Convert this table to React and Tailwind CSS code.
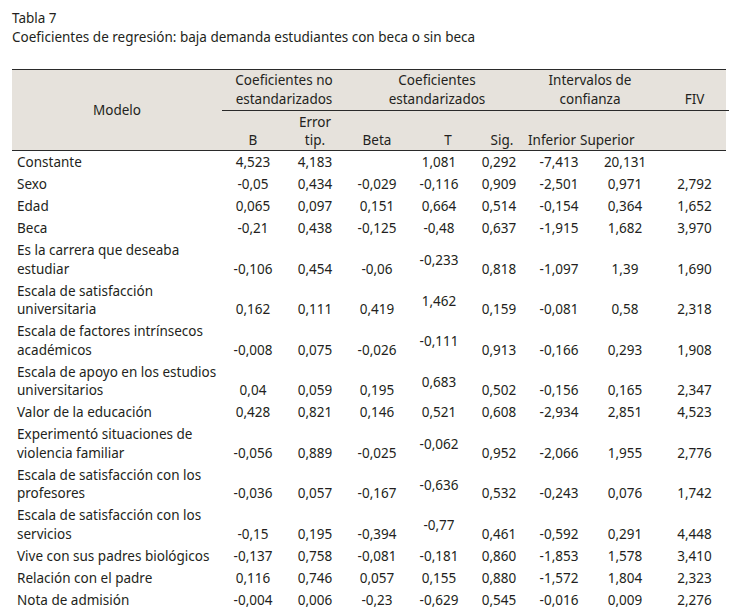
const cols = 'grid grid-cols-[210px_62px_62px_62px_62px_58px_62px_70px_69px]'

const rows = [
  { label: ['Constante'], v: ['4,523', '4,183', '', '1,081', '0,292', '-7,413', '20,131', ''] },
  { label: ['Sexo'], v: ['-0,05', '0,434', '-0,029', '-0,116', '0,909', '-2,501', '0,971', '2,792'] },
  { label: ['Edad'], v: ['0,065', '0,097', '0,151', '0,664', '0,514', '-0,154', '0,364', '1,652'] },
  { label: ['Beca'], v: ['-0,21', '0,438', '-0,125', '-0,48', '0,637', '-1,915', '1,682', '3,970'] },
  { label: ['Es la carrera que deseaba', 'estudiar'], v: ['-0,106', '0,454', '-0,06', '-0,233', '0,818', '-1,097', '1,39', '1,690'] },
  { label: ['Escala de satisfacción', 'universitaria'], v: ['0,162', '0,111', '0,419', '1,462', '0,159', '-0,081', '0,58', '2,318'] },
  { label: ['Escala de factores intrínsecos', 'académicos'], v: ['-0,008', '0,075', '-0,026', '-0,111', '0,913', '-0,166', '0,293', '1,908'] },
  { label: ['Escala de apoyo en los estudios', 'universitarios'], v: ['0,04', '0,059', '0,195', '0,683', '0,502', '-0,156', '0,165', '2,347'] },
  { label: ['Valor de la educación'], v: ['0,428', '0,821', '0,146', '0,521', '0,608', '-2,934', '2,851', '4,523'] },
  { label: ['Experimentó situaciones de', 'violencia familiar'], v: ['-0,056', '0,889', '-0,025', '-0,062', '0,952', '-2,066', '1,955', '2,776'] },
  { label: ['Escala de satisfacción con los', 'profesores'], v: ['-0,036', '0,057', '-0,167', '-0,636', '0,532', '-0,243', '0,076', '1,742'] },
  { label: ['Escala de satisfacción con los', 'servicios'], v: ['-0,15', '0,195', '-0,394', '-0,77', '0,461', '-0,592', '0,291', '4,448'] },
  { label: ['Vive con sus padres biológicos'], v: ['-0,137', '0,758', '-0,081', '-0,181', '0,860', '-1,853', '1,578', '3,410'] },
  { label: ['Relación con el padre'], v: ['0,116', '0,746', '0,057', '0,155', '0,880', '-1,572', '1,804', '2,323'] },
  { label: ['Nota de admisión'], v: ['-0,004', '0,006', '-0,23', '-0,629', '0,545', '-0,016', '0,009', '2,276'] },
]

function Row({ label, v }) {
  const tall = label.length > 1
  return (
    <div className={`${cols} ${tall ? 'h-[40.5px]' : 'h-[22px]'} leading-[18.5px]`}>
      <div className="pl-[5px] pt-[2px]">
        {label.map((l) => (
          <div key={l}>{l}</div>
        ))}
      </div>
      {v.map((x, i) => (
        <div
          key={i}
          className={`flex justify-center ${
            tall && i === 3 ? 'items-center pt-[2px]' : 'items-end pb-[1.5px]'
          }`}
        >
          {x}
        </div>
      ))}
    </div>
  )
}

export default function App() {
  return (
    <div className="w-[738px] h-[614px] overflow-hidden bg-white px-[12px] pt-[9px] text-[13.5px] text-[#231f20] font-['Noto_Sans',sans-serif]">
      <div className="leading-[19px]">
        <div>Tabla 7</div>
        <div>Coeficientes de regresión: baja demanda estudiantes con beca o sin beca</div>
      </div>

      <div className="mt-[22px]">
        {/* encabezado */}
        <div className={`${cols} grid-rows-[41px_39px] bg-[#e6e2dc] border-t border-b border-[#2a2a2a] leading-[19px]`}>
          <div className="row-span-2 flex items-center justify-center pt-[1px]">Modelo</div>
          <div className="col-span-2 flex flex-col items-center justify-end pb-[1px] border-b border-[#2a2a2a]">
            <span>Coeficientes no</span>
            <span>estandarizados</span>
          </div>
          <div className="col-span-3 flex flex-col items-center justify-end pb-[1px] border-b border-[#2a2a2a]">
            <span>Coeficientes</span>
            <span>estandarizados</span>
          </div>
          <div className="col-span-2 flex flex-col items-center justify-end pb-[1px] pr-[8px] border-b border-[#2a2a2a]">
            <span>Intervalos de</span>
            <span>confianza</span>
          </div>
          <div className="flex items-end justify-center pb-[1px] border-b border-[#2a2a2a]">FIV</div>

          <div className="flex items-end justify-center pb-[1px] leading-[18px]">B</div>
          <div className="flex flex-col items-center justify-end pb-[1px] leading-[18px]">
            <span>Error</span>
            <span>tip.</span>
          </div>
          <div className="flex items-end justify-center pb-[1px] leading-[18px]">Beta</div>
          <div className="flex items-end justify-center pb-[1px] pl-[18px] leading-[18px]">T</div>
          <div className="flex items-end justify-center pb-[1px] pl-[6px] leading-[18px]">Sig.</div>
          <div className="flex items-end justify-start pb-[1px] leading-[18px]">Inferior</div>
          <div className="flex items-end justify-start pb-[1px] leading-[18px]">
            <span className="-ml-[10px]">Superior</span>
          </div>
          <div />
        </div>

        {rows.map((r) => (
          <Row key={r.label.join(' ') + r.v[0]} {...r} />
        ))}
      </div>
    </div>
  )
}
